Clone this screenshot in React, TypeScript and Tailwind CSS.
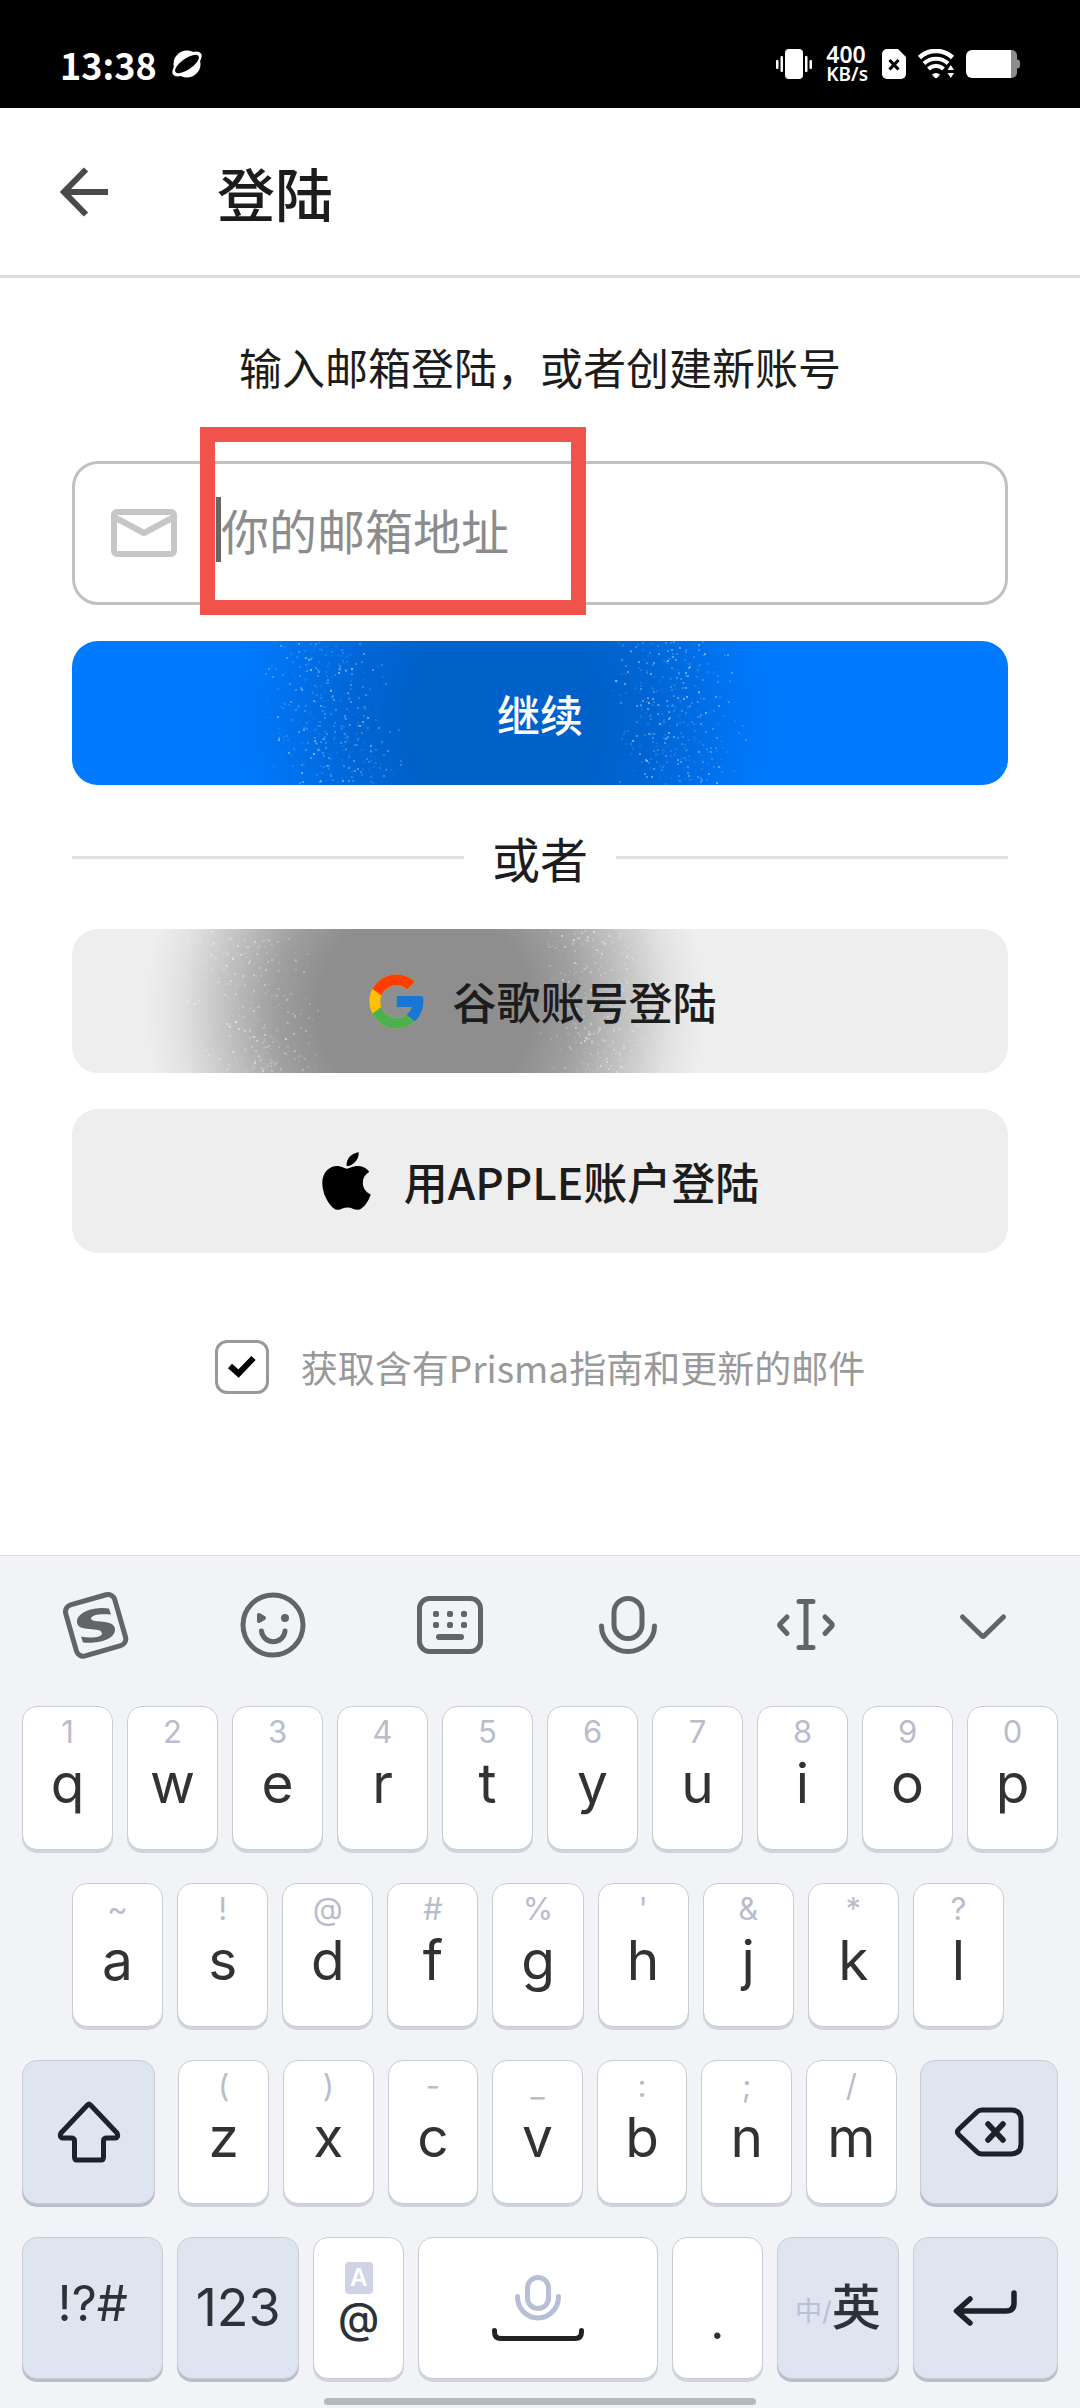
import type { ReactNode } from 'react'
import { FaApple } from 'react-icons/fa'
import { FcGoogle } from 'react-icons/fc'

const TOP_ROW = [
  ['1', 'q'], ['2', 'w'], ['3', 'e'], ['4', 'r'], ['5', 't'],
  ['6', 'y'], ['7', 'u'], ['8', 'i'], ['9', 'o'], ['0', 'p'],
]
const MIDDLE_ROW = [
  ['~', 'a'], ['!', 's'], ['@', 'd'], ['#', 'f'], ['%', 'g'],
  ["'", 'h'], ['&', 'j'], ['*', 'k'], ['?', 'l'],
]
const BOTTOM_ROW = [
  ['(', 'z'], [')', 'x'], ['-', 'c'], ['_', 'v'], [':', 'b'], [';', 'n'], ['/', 'm'],
]

const KEY = 'flex rounded-[15px] border border-[#c9ccd3]'
const LIGHT_KEY = `${KEY} bg-white shadow-[0_3px_0_#d0d4dd]`
const DARK_KEY = `${KEY} items-center justify-center bg-[#dee4f0] shadow-[0_3px_0_#b9becd]`

// small seeded generator so the sparkles stay put between renders
function sparkles(center: number, seed: number) {
  let s = seed
  const next = () => {
    s = (s * 16807) % 2147483647
    return s / 2147483647
  }
  return Array.from({ length: 700 }, () => {
    const side = next() < 0.5 ? -1 : 1
    const distance = 105 + (next() + next()) * 68
    const y = Math.round(next() * 142)
    return {
      x: Math.round(center + side * distance + (y - 72) * 0.1),
      y,
      o: 0.05 + next() * next() * 0.45,
    }
  })
}

function Ripple({ id, center, color, seed }: { id: string; center: number; color: string; seed: number }) {
  return (
    <svg
      className="absolute inset-0 h-full w-full"
      viewBox="0 0 936 144"
      preserveAspectRatio="xMidYMid slice"
      aria-hidden="true"
    >
      <defs>
        <radialGradient id={id} gradientUnits="userSpaceOnUse" cx={center} cy="80" r="280">
          <stop offset="0.38" stopColor={color} />
          <stop offset="0.54" stopColor={color} stopOpacity="0.82" />
          <stop offset="0.72" stopColor={color} stopOpacity="0.45" />
          <stop offset="0.88" stopColor={color} stopOpacity="0.12" />
          <stop offset="1" stopColor={color} stopOpacity="0" />
        </radialGradient>
      </defs>
      <rect width="936" height="144" fill={`url(#${id})`} />
      {sparkles(center, seed).map((d, i) => (
        <rect key={i} x={d.x} y={d.y} width="2" height="2" fill="#fff" fillOpacity={d.o} />
      ))}
    </svg>
  )
}

function StatusBar() {
  return (
    <div className="flex h-[108px] items-center justify-between bg-black px-[60px] pt-5 text-white">
      <div className="flex items-center gap-[14px]">
        <span className="text-[36px] leading-[38px] font-bold">13:38</span>
        <svg width="32" height="30" viewBox="0 0 32 30" aria-hidden="true">
          <circle cx="16" cy="15" r="13.500" fill="#fff" />
          <ellipse cx="16" cy="15" rx="17.500" ry="8" transform="rotate(-38 16 15)" fill="#fff" />
          <ellipse cx="16" cy="15" rx="14" ry="5.500" transform="rotate(-35 16 15)" fill="#000" />
        </svg>
      </div>
      <div className="flex items-center">
        <svg width="36" height="30" viewBox="0 0 36 30" fill="#fff" aria-hidden="true">
          <rect x="9" y="0" width="18" height="30" rx="4" />
          <rect x="4.500" y="7" width="2.500" height="16" rx="1" />
          <rect x="0" y="11" width="2.500" height="9" rx="1" />
          <rect x="29" y="7" width="2.500" height="16" rx="1" />
          <rect x="33.500" y="11" width="2.500" height="9" rx="1" />
        </svg>
        <div className="ml-[14px] flex flex-col font-['Noto_Sans',sans-serif] font-semibold">
          <span className="text-[23px] leading-[20px]">400</span>
          <span className="text-[19px] leading-[20px]">KB/s</span>
        </div>
        <svg className="ml-[14px]" width="24" height="30" viewBox="0 0 24 30" aria-hidden="true">
          <path d="M5 0H16L24 8V25A5 5 0 0 1 19 30H5A5 5 0 0 1 0 25V5A5 5 0 0 1 5 0Z" fill="#fff" />
          <path d="M7.500 11L16.500 20.500M16.500 11L7.500 20.500" stroke="#000" strokeWidth="3.200" />
        </svg>
        <svg className="ml-[12px]" width="37" height="30" viewBox="0 0 37 30" fill="none" stroke="#fff" aria-hidden="true">
          <path d="M1.500 8.500A24 24 0 0 1 34.500 8.500" strokeWidth="4.500" />
          <path d="M6 14.500A17.500 17.500 0 0 1 30 14.500" strokeWidth="4" />
          <path d="M10.500 20A11 11 0 0 1 25.500 20" strokeWidth="4" />
          <path d="M14 25.500Q18 22.500 22 25.500L19.500 28.500Q18 30 16.500 28.500Z" fill="#fff" stroke="none" />
          <path d="M27 21.500L32.500 13L38 21.500V30H27Z" fill="#000" stroke="none" />
          <path d="M29.500 21L32.800 16L36 21ZM29.500 24L32.800 29L36 24Z" fill="#fff" stroke="none" />
        </svg>
        <svg className="ml-[11px]" width="54" height="28" viewBox="0 0 54 28" aria-hidden="true">
          <path d="M44 0H46A5.500 5.500 0 0 1 51 6V9.500Q54 9.500 54 12V16Q54 18.500 51 18.500V22A5.500 5.500 0 0 1 46 28H44Z" fill="#8c8c8c" />
          <path d="M6 0H45V28H6A6 6 0 0 1 0 22V6A6 6 0 0 1 6 0Z" fill="#fff" />
        </svg>
      </div>
    </div>
  )
}

function LoginForm() {
  return (
    <form className="px-[72px] pt-16 text-[#1c1c1c]" onSubmit={(e) => e.preventDefault()}>
      <p className="text-center text-[43px] leading-[48px]">输入邮箱登陆，或者创建新账号</p>

      <div className="relative mt-[71px]">
        <label className="flex h-36 items-center rounded-[26px] border-[3px] border-[#c1c1c1] pl-9">
          <svg width="66" height="48" viewBox="0 0 66 48" fill="none" stroke="#c6c6c6" strokeWidth="6" aria-label="邮箱">
            <rect x="3" y="3" width="60" height="42" rx="3" />
            <path d="M3 8L33 24L63 8" />
          </svg>
          <span className="ml-[39px] flex flex-1 items-center pb-2">
            <span className="h-[65px] w-[5px] bg-[#666]" />
            <input
              type="email"
              placeholder="你的邮箱地址"
              className="h-[72px] w-full min-w-0 bg-transparent text-5xl outline-none placeholder:text-[#8c8c8c]"
            />
          </span>
        </label>
        {/* Marker around the address field */}
        <div className="pointer-events-none absolute -top-[34px] left-32 h-[188px] w-[386px] border-[15px] border-[#f0524c]" />
      </div>

      <button
        type="submit"
        className="relative mt-9 flex h-36 w-full items-center justify-center overflow-hidden rounded-[26px] bg-[#007aff] text-[43px] font-medium text-white"
      >
        <Ripple id="ripple-blue" center={432} color="#0061cb" seed={41357} />
        <span className="relative">继续</span>
      </button>

      <div className="flex h-36 items-center gap-7">
        <div className="h-[3px] flex-1 bg-[#e2e2e2]" />
        <span className="text-5xl">或者</span>
        <div className="h-[3px] flex-1 bg-[#e2e2e2]" />
      </div>

      <button
        type="button"
        className="relative flex h-36 w-full items-center justify-center gap-6 overflow-hidden rounded-[26px] bg-[#eee] text-[44px] font-medium"
      >
        <Ripple id="ripple-gray" center={353} color="#8e8e8e" seed={97731} />
        <FcGoogle className="relative" size={65} />
        <span className="relative">谷歌账号登陆</span>
      </button>

      <button
        type="button"
        className="mt-9 flex h-36 w-full items-center justify-center gap-8 rounded-[26px] bg-[#eee] text-[44px] font-medium"
      >
        <FaApple className="h-[66px] w-[51px] text-black" />
        <span>用APPLE账户登陆</span>
      </button>

      <label className="mt-[87px] flex items-center justify-center gap-8 text-[37px] leading-[54px] text-[#999]">
        <span className="relative h-[54px] w-[54px]">
          <input
            type="checkbox"
            defaultChecked
            className="peer block h-full w-full appearance-none rounded-[12px] border-[3px] border-[#999]"
          />
          <svg
            className="pointer-events-none absolute inset-0 hidden peer-checked:block"
            viewBox="0 0 54 54"
            fill="none"
            stroke="#000"
            strokeWidth="6"
            aria-hidden="true"
          >
            <path d="M15 26L23.500 33.500L38.500 18" />
          </svg>
        </span>
        获取含有Prisma指南和更新的邮件
      </label>
    </form>
  )
}

function ToolButton({ label, children }: { label: string; children: ReactNode }) {
  return (
    <button type="button" aria-label={label} className="flex flex-1 items-center justify-center">
      <svg
        width="68"
        height="68"
        viewBox="0 0 68 68"
        fill="none"
        stroke="#636467"
        strokeWidth="5"
        strokeLinecap="round"
        strokeLinejoin="round"
      >
        {children}
      </svg>
    </button>
  )
}

function LetterKey({ hint, letter }: { hint: string; letter: string }) {
  return (
    <button type="button" className={`${LIGHT_KEY} h-36 min-w-0 flex-1 flex-col items-center pt-[9px]`}>
      <span className="text-[31px] leading-8 text-[#b9bccb]">{hint}</span>
      <span className="mt-2 text-[55px] leading-[54px]">{letter}</span>
    </button>
  )
}

function Keyboard() {
  return (
    <section className="mt-auto border-t border-[#d9dbdd] bg-[#f1f3f7] font-['Inter','Noto_Sans_CJK_SC',sans-serif] text-[#323233]">
      {/* Toolbar */}
      <div className="mb-3 flex h-[138px] pr-[8px] pl-[6px]">
        <ToolButton label="搜狗">
          <rect x="9" y="8" width="51" height="53" rx="7" transform="rotate(-16 34 34)" />
          {/* Sogou mark */}
          <path
            d="M48 17.500C38 15.500 16 19 16 31C16 42 41 35 41 42.500C41 46 31 48 20 45.500L22 51.500C36 53 54 49 54 38.500C54 27 30 33 30 27.500C30 23.500 40 22.500 50 23.500Z"
            fill="#636467"
            stroke="none"
          />
        </ToolButton>
        <ToolButton label="表情">
          <circle cx="34" cy="34" r="30" />
          <path d="M20 24L25 27L20 30Z" strokeWidth="4" />
          <circle cx="46" cy="27" r="4" fill="#636467" stroke="none" />
          <path d="M22.500 40A11.800 11.800 0 0 0 46 40" />
        </ToolButton>
        <ToolButton label="键盘">
          <rect x="3.500" y="7.500" width="61" height="53" rx="10" />
          <g fill="#636467" stroke="none">
            <rect x="17" y="20" width="6" height="6" rx="2" />
            <rect x="31" y="20" width="6" height="6" rx="2" />
            <rect x="45" y="20" width="6" height="6" rx="2" />
            <rect x="17" y="31" width="6" height="6" rx="2" />
            <rect x="31" y="31" width="6" height="6" rx="2" />
            <rect x="45" y="31" width="6" height="6" rx="2" />
          </g>
          <path d="M23 46H45" strokeWidth="6" />
        </ToolButton>
        <ToolButton label="语音">
          <rect x="20" y="7.500" width="28" height="40" rx="14" />
          <path d="M7.500 35C7.500 49 20 60.500 34 60.500S60.500 49 60.500 35" />
        </ToolButton>
        <ToolButton label="移动光标">
          <path d="M34 10.500V56.500M27 10.500H41M27 56.500H41M15 26L8.500 32.500Q7 34 8.500 35.500L15 42.500M53 26L59.500 32.500Q61 34 59.500 35.500L53 42.500" />
        </ToolButton>
        <ToolButton label="收起">
          <path d="M13.500 26L33 45Q34 46 35 45L54.500 26" />
        </ToolButton>
      </div>

      {/* Keys */}
      <div className="flex flex-col gap-[33px] px-[22px]">
        <div className="flex gap-[14px]">
          {TOP_ROW.map(([hint, letter]) => (
            <LetterKey key={letter} hint={hint} letter={letter} />
          ))}
        </div>

        <div className="flex gap-[14px] pr-[54px] pl-[50px]">
          {MIDDLE_ROW.map(([hint, letter]) => (
            <LetterKey key={letter} hint={hint} letter={letter} />
          ))}
        </div>

        <div className="flex gap-[23px]">
          <button type="button" aria-label="大写" className={`${DARK_KEY} h-36 flex-[132]`}>
            <svg width="64" height="62" viewBox="0 0 64 62" fill="none" stroke="#1d2129" strokeWidth="5" strokeLinejoin="round">
              <path d="M30.500 4Q32 2.500 33.500 4L60 32Q62 36.500 58 37H50Q46.500 37 46.500 40V56Q46.500 59 44 59H20Q17.500 59 17.500 56V40Q17.500 37 14 37H6Q2 36.500 4 32Z" />
            </svg>
          </button>
          <div className="flex flex-[721] gap-[14px]">
            {BOTTOM_ROW.map(([hint, letter]) => (
              <LetterKey key={letter} hint={hint} letter={letter} />
            ))}
          </div>
          <button type="button" aria-label="删除" className={`${DARK_KEY} h-36 flex-[137]`}>
            <svg width="70" height="50" viewBox="0 0 70 50" fill="none" stroke="#1d2129" strokeWidth="5" strokeLinecap="round" strokeLinejoin="round">
              <path d="M28 3H57Q67 3 67 13V37Q67 47 57 47H28Q25 47 23 45L5 28Q2 25 5 22L23 5Q25 3 28 3Z" />
              <path d="M34 17L49 33M49 17L34 33" strokeWidth="5.500" />
            </svg>
          </button>
        </div>

        <div className="flex h-[142px] gap-[14px] text-[#2d3239]">
          <button type="button" className={`${DARK_KEY} min-w-0 flex-[142] pb-2 text-[49px]`}>!?#</button>
          <button type="button" className={`${DARK_KEY} min-w-0 flex-[122] text-[52px]`}>123</button>
          <button type="button" className={`${LIGHT_KEY} min-w-0 flex-[91] flex-col items-center pt-6`}>
            <span className="flex h-8 w-7 items-center justify-center rounded-[4px] bg-[#cfd3e5] text-2xl font-semibold text-white">A</span>
            <span className="text-[42px] leading-[48px] font-medium">@</span>
          </button>
          <button type="button" aria-label="空格" className={`${LIGHT_KEY} min-w-0 flex-[242] items-center justify-center`}>
            <svg width="92" height="68" viewBox="0 0 92 68" fill="none" strokeWidth="5" strokeLinecap="round">
              <g stroke="#b7bfd5">
                <rect x="35.500" y="3.500" width="21" height="31" rx="10.500" />
                <path d="M25.500 22.500C25.500 34 34 44 46 44S66.500 34 66.500 22.500" />
              </g>
              <path d="M2.500 56.500V58Q2.500 64.500 9 64.500H83Q89.500 64.500 89.500 58V56.500" stroke="#232323" />
            </svg>
          </button>
          <button type="button" className={`${LIGHT_KEY} min-w-0 flex-[91] items-end justify-center pb-8 text-[49px] leading-[48px]`}>.</button>
          <button type="button" className={`${DARK_KEY} min-w-0 flex-[122]`}>
            <span className="pt-2 text-[27px] text-[#b9c0d5]">中/</span>
            <span className="text-[49px] font-medium">英</span>
          </button>
          <button type="button" aria-label="换行" className={`${DARK_KEY} min-w-0 flex-[146]`}>
            <svg width="64" height="36" viewBox="0 0 64 36" fill="none" stroke="#1d2129" strokeWidth="5.500" strokeLinecap="round" strokeLinejoin="round">
              <path d="M61 3V13Q61 21 53 21H4M17 9L3.500 21L17 33" />
            </svg>
          </button>
        </div>
      </div>

      {/* Home indicator */}
      <div className="mx-auto mt-[19px] mb-[3px] h-[7px] w-2/5 rounded-full bg-[#b8b8bf]" />
    </section>
  )
}

export default function App() {
  return (
    <main lang="zh-CN" className="flex min-h-screen flex-col bg-white font-['Noto_Sans_CJK_SC',sans-serif]">
      <StatusBar />

      <header className="flex h-[170px] items-center border-b-[3px] border-[#dcdcdc] px-[60px]">
        <button type="button" aria-label="返回">
          <svg width="48" height="50" viewBox="0 0 48 50" fill="none" stroke="#4a4a4a" strokeWidth="6">
            <path d="M48 25H5M26 2.500L4 25L26 47.500" />
          </svg>
        </button>
        <h1 className="ml-[109px] text-[58px] leading-[64px] font-medium text-[#1c1c1c]">登陆</h1>
      </header>

      <LoginForm />
      <Keyboard />
    </main>
  )
}
